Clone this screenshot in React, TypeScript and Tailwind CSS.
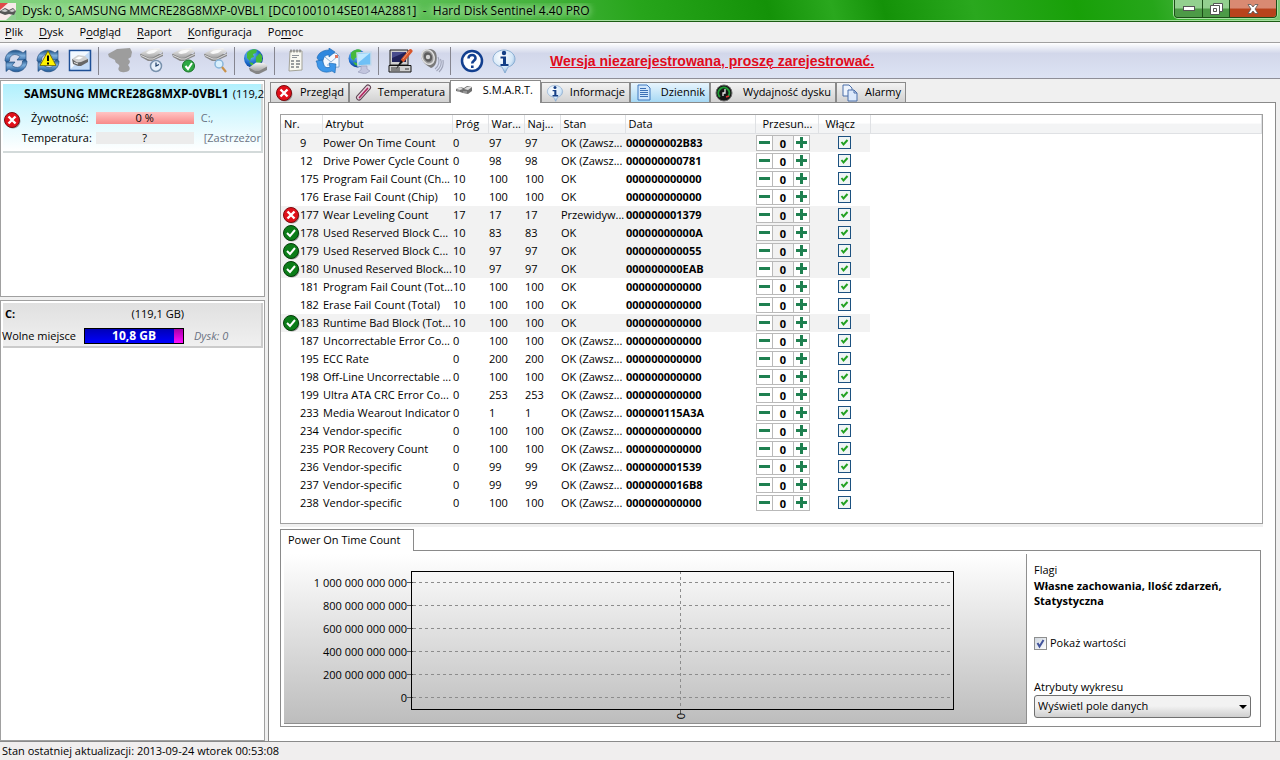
import { useState } from 'react';
import type { ReactNode } from 'react';

type Status = 'ok' | 'bad' | null;
type Row = [id: number, name: string, threshold: number, value: number, worst: number, state: string, data: string, status: Status];

const ALWAYS = 'OK (Zawsz...';

const rows: Row[] = [
  [9, 'Power On Time Count', 0, 97, 97, ALWAYS, '000000002B83', null],
  [12, 'Drive Power Cycle Count', 0, 98, 98, ALWAYS, '000000000781', null],
  [175, 'Program Fail Count (Ch...', 10, 100, 100, 'OK', '000000000000', null],
  [176, 'Erase Fail Count (Chip)', 10, 100, 100, 'OK', '000000000000', null],
  [177, 'Wear Leveling Count', 17, 17, 17, 'Przewidyw...', '000000001379', 'bad'],
  [178, 'Used Reserved Block C...', 10, 83, 83, 'OK', '00000000000A', 'ok'],
  [179, 'Used Reserved Block C...', 10, 97, 97, 'OK', '000000000055', 'ok'],
  [180, 'Unused Reserved Block...', 10, 97, 97, 'OK', '000000000EAB', 'ok'],
  [181, 'Program Fail Count (Tot...', 10, 100, 100, 'OK', '000000000000', null],
  [182, 'Erase Fail Count (Total)', 10, 100, 100, 'OK', '000000000000', null],
  [183, 'Runtime Bad Block (Tot...', 10, 100, 100, 'OK', '000000000000', 'ok'],
  [187, 'Uncorrectable Error Co...', 0, 100, 100, ALWAYS, '000000000000', null],
  [195, 'ECC Rate', 0, 200, 200, ALWAYS, '000000000000', null],
  [198, 'Off-Line Uncorrectable ...', 0, 100, 100, ALWAYS, '000000000000', null],
  [199, 'Ultra ATA CRC Error Co...', 0, 253, 253, ALWAYS, '000000000000', null],
  [233, 'Media Wearout Indicator', 0, 1, 1, ALWAYS, '000000115A3A', null],
  [234, 'Vendor-specific', 0, 100, 100, ALWAYS, '000000000000', null],
  [235, 'POR Recovery Count', 0, 100, 100, ALWAYS, '000000000000', null],
  [236, 'Vendor-specific', 0, 99, 99, ALWAYS, '000000001539', null],
  [237, 'Vendor-specific', 0, 99, 99, ALWAYS, '0000000016B8', null],
  [238, 'Vendor-specific', 0, 100, 100, ALWAYS, '000000000000', null],
];

function Defs() {
  return (
    <svg width="0" height="0" className="absolute" aria-hidden="true">
      <defs>
        <linearGradient id="steel" x1="0" y1="0" x2="0" y2="1">
          <stop offset="0" stopColor="#f6f6f6" />
          <stop offset="1" stopColor="#a2a2a2" />
        </linearGradient>
        <linearGradient id="blue" x1="0" y1="0" x2="0" y2="1">
          <stop offset="0" stopColor="#16497f" />
          <stop offset="0.45" stopColor="#7fb0dd" />
          <stop offset="1" stopColor="#1b5696" />
        </linearGradient>
        <radialGradient id="globe" cx="0.35" cy="0.3" r="0.8">
          <stop offset="0" stopColor="#7cc6fb" />
          <stop offset="0.6" stopColor="#1767c8" />
          <stop offset="1" stopColor="#0a2f78" />
        </radialGradient>
        <radialGradient id="bubble" cx="0.4" cy="0.3" r="0.8">
          <stop offset="0" stopColor="#ffffff" />
          <stop offset="0.6" stopColor="#d3e6f7" />
          <stop offset="1" stopColor="#6e9ccb" />
        </radialGradient>
      </defs>
    </svg>
  );
}

function Icon({ children, size = 26, box = 26 }: { children: ReactNode; size?: number; box?: number }) {
  return (
    <svg width={size} height={size} viewBox={`0 0 ${box} ${box}`} fill="none" className="shrink-0" aria-hidden="true">
      {children}
    </svg>
  );
}

const Drive = () => (
  <g>
    <path d="m1 6 1 3 7 4 4 0 11-5V4l-2 2Z" fill="#878787" />
    <path d="M1 5.500 10 1l10-1 4 3.500-10 6-4 .5Z" fill="url(#steel)" />
    <path d="M7 5c2-3 8-4 12-3l-4 3-5 1Z" fill="#fdfdfd" opacity=".9" />
    <path d="m2 7.500 8 3.500 4 0 10-5" stroke="#dcdcdc" />
  </g>
);

const Arrows = () => (
  <g fill="url(#blue)" stroke="#194475" strokeWidth=".6">
    <path d="M2 13C2 3 13-1 20 5l3-2.500V12h-9l3-3.500C12 4.500 6 7 6.500 13l-2 1.500Z" />
    <path d="M24 13c0 10-11 14-18 8l-3 2.500V14h9l-3 3.500c5 4 11 1.500 10.500-4.500l2-1.500Z" />
  </g>
);

const Globe = ({ r = 9 }: { r?: number }) => (
  <g>
    <circle cx="10.500" cy="10.500" r={r} fill="url(#globe)" />
    <path d="M4 5c3-4 8-4.500 10-3l-1 3-3 1 1 3-3 1-1 3-3-3Zm9 4 4-4 2 3v5l-3 3-3-2Zm-7 5 4 1 1 3-3-1Z" fill="#45b93c" />
  </g>
);

const RefreshIcon = () => <Icon><Arrows /></Icon>;

const WarnIcon = () => (
  <Icon>
    <Arrows />
    <path d="m13 3 8 14.500H5Z" fill="#fff200" stroke="#6d6400" strokeWidth=".8" />
    <path d="M13 7.500v5.500M13 14.500v2" stroke="#000" strokeWidth="2" />
  </Icon>
);

const TileIcon = () => (
  <Icon>
    <rect x="2.500" y="2.500" width="21" height="20" fill="#c4dcf8" stroke="#1e4f96" strokeWidth="1.500" />
    <path d="M3.500 3.500h19L3.500 21Z" fill="#f2f8ff" />
    <path d="m5 11 1 5 5 2 3 0 7-4v-3Z" fill="#676767" />
    <path d="m5 11 6-4 7 1 3 3-7 3-4 .5Z" fill="#cfcfcf" />
    <path d="m8 10.500 4-2 4 1-4 2Z" fill="#fff" />
    <path d="m7 14.500 4 1.500" stroke="#e5e5e5" />
  </Icon>
);

const DriveOffIcon = () => (
  <Icon>
    <path d="m1 6 9-5 13-1 2 4-1 5-3 2c3 2 2 4 0 6 3 3 2 7-3 7-5 1-8-2-6-5 1-1 0-2-1-3-2-1-3-2-3-4l-6-3Z" fill="#9d9d9d" />
  </Icon>
);

const DriveClockIcon = () => (
  <Icon>
    <Drive />
    <circle cx="17" cy="18" r="5.500" fill="#e6f0fa" stroke="#7992ad" strokeWidth="1.500" />
    <path d="M17 14.500V18l3-1.500" stroke="#1c3d66" strokeWidth="1.200" />
  </Icon>
);

const DriveCheckIcon = () => (
  <Icon>
    <Drive />
    <circle cx="17.500" cy="18" r="6" fill="#2ea844" stroke="#177225" />
    <path d="m14.500 18 2.500 3 4-6" stroke="#fff" strokeWidth="2" />
  </Icon>
);

const DriveSearchIcon = () => (
  <Icon>
    <Drive />
    <circle cx="16" cy="16" r="4" fill="#d9effc" stroke="#88b5da" strokeWidth="1.500" />
    <path d="m19 19 4 5" stroke="#c9924a" strokeWidth="2.200" />
  </Icon>
);

const GlobeDriveIcon = () => (
  <Icon>
    <Globe r={9.500} />
    <path d="m6 20 1 3 6 3 3 0 8-4v-4Z" fill="#858585" />
    <path d="m6 19.500 7-5 8 .5 4 3-9 5-4 0Z" fill="url(#steel)" />
  </Icon>
);

const ReportIcon = () => (
  <Icon>
    <path d="M7 3h12v19l-13 1Z" fill="#f8f8f2" stroke="#a3a398" />
    <path d="M8 1.500v3M11 1.500v3M14 1.500v3M17 1.500v3" stroke="#666" />
    <path d="M9 7.500h7M9 9.500h5" stroke="#8c9299" />
    <path d="M8 13h3M13 13h4M8 16h3M13 16h4M8 19h3M13 19h3" stroke="#7a7f84" strokeWidth="1.300" />
  </Icon>
);

const MailIcon = () => (
  <Icon>
    <path d="m8 6 13-1 3 3v11L8 20Z" fill="#f4f9ff" stroke="#7ea4cd" />
    <path d="m10 9 6 5 7-6M12 17h8" stroke="#8fb0d3" />
    <path d="M20 7h3v3h-3Z" fill="#e0755f" />
    <path d="M2 10c1-5 6-8 12-8V0l6 4-6 5V7c-4 0-5 2-6 5l-3 2Z" fill="#2d87de" stroke="#1763ad" strokeWidth=".6" />
    <path d="m1 13 6-1 2 5c1 3 4 3 6 2l-1-4 7 1-1 9-3-2c-7 3-15 0-15-8Z" fill="#3d97ea" stroke="#1763ad" strokeWidth=".6" />
  </Icon>
);

const NetworkIcon = () => (
  <Icon>
    <Globe r={9} />
    <path d="m10 5 14-1v13l-13 1Z" fill="#6fc0f6" stroke="#c6d9ea" strokeWidth="1.500" />
    <path d="m11 6 12-1-12 10Z" fill="#bfe8ff" />
    <path d="m14 18 6 0v3l3 2-5 3-7-2 3-2Z" fill="#c2c5de" stroke="#9498b5" strokeWidth=".6" />
  </Icon>
);

const ComputerIcon = () => (
  <Icon>
    <path d="M3 2h18v15H3Z" fill="#cfcfcf" stroke="#222" />
    <path d="M5 4h14v10H5Z" fill="#20225a" />
    <path d="M5 4h14l-14 6Z" fill="#494c8c" />
    <path d="M2 17.500h22v6.500H2Z" fill="#cfcfcf" stroke="#111" />
    <path d="M4 20h9M4 22h9M18 21h4" stroke="#333" />
    <path d="M23.500 3 16 12" stroke="#d8562c" strokeWidth="4" strokeLinecap="round" />
    <path d="M22.500 3 16 11" stroke="#f49b6d" />
    <path d="m14 12-5 9 7-7Z" fill="#111" />
  </Icon>
);

const SpeakerIcon = () => (
  <Icon>
    <path d="M4 3c4-3 11-3 13 2 2 6 0 14-5 15C8 18 2 13 2 8Z" fill="#7a7a7a" />
    <ellipse cx="9" cy="9" rx="6" ry="7.500" transform="rotate(-25 9 9)" fill="#9b9b9b" stroke="#dedede" strokeWidth="1.500" />
    <ellipse cx="9" cy="9" rx="4" ry="5" transform="rotate(-25 9 9)" fill="#5d5d5d" />
    <circle cx="9" cy="9" r="2.200" fill="#d5d5d5" />
    <path d="M19 9c2 4 1 9-3 12M21.500 11c2 4 0 9-4 12M24 12c1 5-1 9-4 12" stroke="#9fa4b8" strokeWidth="1.100" />
  </Icon>
);

const HelpIcon = () => (
  <Icon>
    <circle cx="13" cy="13" r="10" fill="#fff" stroke="#123f8f" strokeWidth="2.500" />
    <path d="M9.500 10.500C9.500 5.500 17 6 16.500 10.500c-.2 2.200-3.300 2.500-3.300 5" stroke="#123f8f" strokeWidth="2.600" />
    <path d="M12 17.500h2.600V20H12Z" fill="#123f8f" />
  </Icon>
);

const InfoIcon = ({ size = 26 }: { size?: number }) => (
  <Icon size={size}>
    <path d="M13 2c6 0 11 4 11 9 0 4-3 7-7 8l-3 6-3-6c-5-1-9-4-9-8 0-5 5-9 11-9Z" fill="url(#bubble)" stroke="#7ba3cc" strokeWidth=".8" />
    <circle cx="13" cy="5" r="2.200" fill="#153f86" />
    <path d="M9.500 8.500H15V16h2.500v2h-8v-2H12v-5.500H9.500Z" fill="#153f86" />
  </Icon>
);

function StatusIcon({ ok, size = 18 }: { ok: boolean; size?: number }) {
  return (
    <Icon size={size} box={18}>
      <circle cx="10" cy="10" r="7.500" fill="#777" opacity=".7" />
      <circle cx="9" cy="9" r="7.500" fill={ok ? '#0b7d18' : '#e0101a'} stroke={ok ? '#053d0b' : '#7d0a0e'} />
      {ok ? (
        <path d="m5 9 3 3 5-6" stroke="#fff" strokeWidth="2" />
      ) : (
        <path d="m5.500 5.500 7 7m0-7-7 7" stroke="#fff" strokeWidth="2.400" />
      )}
    </Icon>
  );
}

const ThermoIcon = () => (
  <Icon size={18} box={18}>
    <path d="M14 3.500 5 13.500" stroke="#5d4452" strokeWidth="6" strokeLinecap="round" />
    <path d="M14 3.500 5 13.500" stroke="#e9d3de" strokeWidth="4" strokeLinecap="round" />
    <path d="m13.500 4.500-8 9" stroke="#b0265e" strokeWidth="1.700" strokeLinecap="round" />
  </Icon>
);

const MiniDriveIcon = () => (
  <Icon size={18} box={18}>
    <path d="m1 7 4-2 4 1 3-2 5 1v4l-4 3-5-1-3-1-4-1Z" fill="#6f6f6f" />
    <path d="m1 7 4-2 3 2-3 1ZM9 7l3-2 5 0-4 3Z" fill="#ddd" />
    <path d="M2 9h3M8 10h4" stroke="#bbb" />
  </Icon>
);

const LogIcon = () => (
  <Icon size={18} box={18}>
    <path d="M3 1h9l3 3v12H3Z" fill="#cfe6fc" stroke="#3f78bf" />
    <path d="M5 4.500h6M5 6.500h8M5 8.500h8M5 10.500h8M5 12.500h8" stroke="#3b6fb5" />
  </Icon>
);

const GaugeIcon = () => (
  <Icon size={18} box={18}>
    <circle cx="9" cy="9" r="8" fill="#151515" stroke="#6b6b6b" />
    <path d="M5 13a5.500 5.500 0 1 1 8.500-1" stroke="#1f9a35" strokeWidth="2" />
    <path d="M8 12V9h2V5" stroke="#e8e8e8" strokeWidth="1.300" />
    <path d="M11 13l3-1" stroke="#e03030" strokeWidth="1.500" />
  </Icon>
);

const CopyIcon = () => (
  <Icon size={18} box={18}>
    <path d="M2 1h6l3 3v8H2Z" fill="#eef4fd" stroke="#4a6ea9" />
    <path d="M7 6h6l3 3v8H7Z" fill="#dce9fb" stroke="#4a6ea9" />
    <path d="M13 6v3h3" stroke="#4a6ea9" />
  </Icon>
);

const menu: [string, string, string][] = [
  ['', 'P', 'lik'],
  ['', 'D', 'ysk'],
  ['P', 'o', 'dgląd'],
  ['', 'R', 'aport'],
  ['', 'K', 'onfiguracja'],
  ['Po', 'm', 'oc'],
];

const toolGroups: { label: string; icon: ReactNode }[][] = [
  [
    { label: 'Odśwież', icon: <RefreshIcon /> },
    { label: 'Odśwież ostrzeżenia', icon: <WarnIcon /> },
    { label: 'Widok dysku', icon: <TileIcon /> },
  ],
  [
    { label: 'Dysk niedostępny', icon: <DriveOffIcon /> },
    { label: 'Krótki test', icon: <DriveClockIcon /> },
    { label: 'Pełny test', icon: <DriveCheckIcon /> },
    { label: 'Test powierzchni', icon: <DriveSearchIcon /> },
  ],
  [{ label: 'Dysk sieciowy', icon: <GlobeDriveIcon /> }],
  [
    { label: 'Raport', icon: <ReportIcon /> },
    { label: 'Wyślij raport', icon: <MailIcon /> },
    { label: 'Sieć', icon: <NetworkIcon /> },
  ],
  [
    { label: 'Ustawienia', icon: <ComputerIcon /> },
    { label: 'Dźwięk', icon: <SpeakerIcon /> },
  ],
  [
    { label: 'Pomoc', icon: <HelpIcon /> },
    { label: 'Informacje', icon: <InfoIcon /> },
  ],
];

const tabs = [
  { label: 'Przegląd', icon: <StatusIcon ok={false} />, width: 'w-[79px]' },
  { label: 'Temperatura', icon: <ThermoIcon />, width: 'w-[101px]' },
  { label: 'S.M.A.R.T.', icon: <MiniDriveIcon />, width: 'w-[91px]' },
  { label: 'Informacje', icon: <InfoIcon size={18} />, width: 'w-[89px]' },
  { label: 'Dziennik', icon: <LogIcon />, width: 'w-[80px]' },
  { label: 'Wydajność dysku', icon: <GaugeIcon />, width: 'w-[126px]' },
  { label: 'Alarmy', icon: <CopyIcon />, width: 'w-[70px]' },
];

function TitleBar() {
  return (
    <header className="flex h-[22px] shrink-0 items-center border-b border-[#1c5c14] bg-[linear-gradient(75deg,#86d381_0%,#6cc766_25%,#45b33d_42%,#27a51b_50%,#149208_60%,#2aa81e_65%,#149208_69%,#2aa81e_76%,#18a008_84%,#26a61a_90%,#7dcb78_100%)] shadow-[inset_0_-1px_0_#a5dfa0]">
      <svg width="18" height="20" viewBox="0 0 18 20" className="shrink-0" aria-hidden="true">
        <path d="M0 2h16v17H0Z" fill="#f7eaea" />
        <path d="M0 2h8L0 9Z" fill="#e04a4a" />
        <path d="M16 10v9H6Z" fill="#8fcf92" />
        <path d="m0 10 5-3 4 2 4-2 3 3-2 4-5-1-4 1-5-2Z" fill="#555" />
        <path d="m1 10 4-2 3 2-3 1Zm8 0 4-2 2 2-3 1Z" fill="#ccc" />
      </svg>
      <h1 className="ml-1 flex-1 truncate text-xs whitespace-pre [text-shadow:0_0_6px_#d8f5d4,0_0_8px_#d8f5d4]">
        Dysk: 0, SAMSUNG MMCRE28G8MXP-0VBL1 [DC01001014SE014A2881]  -  Hard Disk Sentinel 4.40 PRO
      </h1>
      <div className="mr-[3px] flex h-[18px] self-start overflow-hidden rounded-b border border-t-0 border-[#1c4d18] shadow-[0_0_0_1px_#a8e0a2]">
        <button aria-label="Minimalizuj" className="grid w-[28px] place-items-center border-r border-[#1c4d18] bg-linear-to-b from-[#93d08f] from-45% to-[#4d9a47] to-55%">
          <svg width="12" height="5" viewBox="0 0 12 5"><rect x=".5" y=".5" width="11" height="4" fill="#fff" stroke="#555" /></svg>
        </button>
        <button aria-label="Przywróć" className="grid w-[27px] place-items-center border-r border-[#1c4d18] bg-linear-to-b from-[#93d08f] from-45% to-[#4d9a47] to-55%">
          <svg width="13" height="12" viewBox="0 0 13 12" fill="#fff" stroke="#555">
            <path d="M3.500.5h9v8h-9Z" />
            <path d="M.5 2.500h9v9h-9ZM3.500 5.500h3v3h-3Z" fillRule="evenodd" />
          </svg>
        </button>
        <button aria-label="Zamknij" className="grid w-[46px] place-items-center bg-linear-to-b from-[#d98a72] from-45% to-[#b8431c] to-55%">
          <svg width="12" height="10" viewBox="0 0 12 10">
            <path d="M1 .5h3l2 2.500 2-2.500h3L8 5l3 4.500H8L6 7 4 9.500H1L4 5Z" fill="#fff" stroke="#555" strokeWidth=".8" />
          </svg>
        </button>
      </div>
    </header>
  );
}

function Toolbar() {
  return (
    <div className="flex h-[36px] shrink-0 items-center border-b border-[#8f8f98] bg-linear-to-b from-white via-[#d2d7ea] via-30% to-[#dde3f4]">
      {toolGroups.map((group, i) => (
        <div key={group[0].label} className="flex items-center">
          {i > 0 && <span className="mr-[5px] ml-[2px] h-[28px] w-px bg-[#85858f]" />}
          {group.map(tool => (
            <button key={tool.label} aria-label={tool.label} className="grid size-8 place-items-center">
              {tool.icon}
            </button>
          ))}
        </div>
      ))}
      <a href="#register" className="ml-[30px] font-['Liberation_Sans',Arial,sans-serif] text-sm font-bold text-[#e00b1c] underline">
        Wersja niezarejestrowana, proszę zarejestrować.
      </a>
    </div>
  );
}

function Sidebar() {
  return (
    <aside className="flex w-[265px] shrink-0 flex-col gap-[3px] pt-px whitespace-nowrap">
      <section className="h-[217px] border border-[#a0a0a0] bg-white p-[2px] pr-px">
        <div className="h-[69px] border-r-2 border-b-2 border-[#d3dada] bg-linear-to-b from-[#b0f0fd] to-white">
          <p className="mt-px ml-[21px] flex gap-1 leading-5"><b className="text-xs leading-5">SAMSUNG MMCRE28G8MXP-0VBL1</b> (119,2</p>
          <div className="flex pt-1">
            <div className="flex w-[19px] pt-[3px]"><StatusIcon ok={false} /></div>
            <div className="grid flex-1 grid-cols-[67px_98px_1fr] gap-x-[7px] leading-5">
              <span className="text-right">Żywotność:</span>
              <span className="my-1 bg-linear-to-b from-[#ffc4c4] to-[#f78a8a] text-center leading-3">0 %</span>
              <span className="text-gray-500">C:,</span>
              <span className="text-right">Temperatura:</span>
              <span className="my-1 bg-[#ececec] text-center leading-3">?</span>
              <span className="pl-[3px] text-gray-500">[Zastrzeżor</span>
            </div>
          </div>
        </div>
      </section>
      <section className="flex-1 border border-[#a0a0a0] bg-white p-[2px] pr-px">
        <div className="h-[45px] border-r-2 border-b-2 border-[#cbcbcb] bg-linear-to-b from-[#e0e0e0] to-[#f0f0f0]">
          <p className="flex w-[181px] justify-between pl-[2px] leading-[22px]"><b>C:</b><span>(119,1 GB)</span></p>
          <div className="-ml-px flex items-center leading-[22px]">
            <span className="w-[82px]">Wolne miejsce</span>
            <span className="flex h-4 w-[100px] border border-black bg-linear-to-b from-[#0000b8] to-[#0000ff] text-center text-xs font-bold text-white">
              <span className="-mr-[9px] flex-1 leading-[14px]">10,8 GB</span>
              <span className="w-[9px] bg-linear-to-b from-[#a800a8] to-[#ff10ff]" />
            </span>
            <i className="ml-[10px] text-gray-500">Dysk: 0</i>
          </div>
        </div>
      </section>
    </aside>
  );
}

function Tabs() {
  const [active, setActive] = useState('S.M.A.R.T.');

  return (
    <nav className="flex h-[22px] shrink-0 items-end pl-[2px]">
      {tabs.map(tab => (
        <button
          key={tab.label}
          onClick={() => setActive(tab.label)}
          className={`${tab.width} flex items-center justify-between border border-b-0 border-[#8a8a8a] pr-1 pl-1 whitespace-nowrap ${
            tab.label === active
              ? 'z-10 -mb-px h-[23px] bg-white pr-[7px] pb-[3px]'
              : tab.label === 'Dziennik'
                ? 'h-5 border-[#3c7fb1] bg-linear-to-b from-[#e8f5fd] to-[#a6d8f4]'
                : 'h-5 bg-linear-to-b from-[#f3f3f3] to-[#d2d2d2]'
          }`}
        >
          {tab.icon}
          {tab.label}
        </button>
      ))}
    </nav>
  );
}

function Offset({ name }: { name: string }) {
  const [value, setValue] = useState(0);

  return (
    <div className="flex h-4 w-[54px] border border-[#b9b9b9]">
      <button aria-label={`Zmniejsz ${name}`} onClick={() => setValue(value - 1)} className="grid w-[15px] place-items-center bg-white">
        <span className="h-[3px] w-[11px] bg-[#1e8050]" />
      </button>
      <span className="flex-1 border-x border-[#b9b9b9] text-center leading-[15px] font-bold">{value}</span>
      <button aria-label={`Zwiększ ${name}`} onClick={() => setValue(value + 1)} className="grid w-[15px] place-items-center bg-white">
        <svg width="11" height="11" viewBox="0 0 11 11"><path d="M4 0h3v4h4v3H7v4H4V7H0V4h4Z" fill="#1e8050" /></svg>
      </button>
    </div>
  );
}

function SmartTable() {
  return (
    <div className="h-[410px] shrink-0 border border-[#a0a0a0] bg-white">
      <table className="w-full table-fixed border-collapse text-left whitespace-nowrap">
        <colgroup>
          <col className="w-[41px]" />
          <col className="w-[130px]" />
          <col className="w-[36px]" />
          <col className="w-[36px]" />
          <col className="w-[36px]" />
          <col className="w-[65px]" />
          <col className="w-[130px]" />
          <col className="w-[63px]" />
          <col className="w-[52px]" />
          <col />
        </colgroup>
        <thead>
          <tr className="h-[18px] leading-[17px] *:border-r *:border-b *:border-[#dfe1e4] *:bg-linear-to-b *:from-white *:from-45% *:to-[#f3f4f5] *:to-50% *:p-0 *:pl-[3px] *:font-normal">
            <th>Nr.</th>
            <th>Atrybut</th>
            <th>Próg</th>
            <th>War...</th>
            <th>Naj...</th>
            <th>Stan</th>
            <th>Data</th>
            <th><span className="pl-1">Przesun...</span></th>
            <th><span className="pl-1">Włącz</span></th>
            <th aria-hidden="true" />
          </tr>
        </thead>
        <tbody>
          {rows.map(([id, name, threshold, value, worst, state, data, status], i) => (
            <tr key={id} className={`h-[18px] leading-[18px] *:p-0 *:pl-px ${status || i === 0 ? '*:not-last:bg-[#f2f2f2]' : ''}`}>
              <td>
                <div className="flex h-[18px] items-center">
                  <span className="w-[18px]">{status && <StatusIcon ok={status === 'ok'} />}</span>
                  {id}
                </div>
              </td>
              <td>{name}</td>
              <td>{threshold}</td>
              <td>{value}</td>
              <td>{worst}</td>
              <td>{state}</td>
              <td className="font-bold">{data}</td>
              <td><Offset name={name} /></td>
              <td>
                <label className="ml-[19px] grid size-[13px]">
                  <input type="checkbox" defaultChecked aria-label={`Włącz ${name}`} className="peer size-[13px] appearance-none border border-[#1c5180] bg-[#f0f5f5] [grid-area:1/1]" />
                  <svg width="13" height="13" viewBox="0 0 13 13" className="invisible [grid-area:1/1] peer-checked:visible">
                    <path d="m3.500 6 2 2.500L9.500 4" fill="none" stroke="#21a121" strokeWidth="2" />
                  </svg>
                </label>
              </td>
              <td />
            </tr>
          ))}
        </tbody>
      </table>
    </div>
  );
}

const ticks = ['1 000 000 000 000', '800 000 000 000', '600 000 000 000', '400 000 000 000', '200 000 000 000', '0'];

function Chart() {
  return (
    <div className="flex flex-1 border-r border-b border-[#8f8f8f] bg-linear-to-b from-white to-[#bdbdbd] pt-[17px] pr-[72px]">
      <div className="w-[123px] text-right">
        {ticks.map(t => <div key={t} className="h-[23px] leading-[23px]">{t}</div>)}
      </div>
      <svg className="h-[152px] min-w-0 flex-1" aria-hidden="true">
        {ticks.map((t, i) => (
          <g key={t} stroke="#8c8c8c">
            <line x1="0" x2="6" y1={11.5 + i * 23} y2={11.5 + i * 23} stroke="#555" />
            <line x1="6" x2="100%" y1={11.5 + i * 23} y2={11.5 + i * 23} strokeDasharray="3 3" />
          </g>
        ))}
        <line x1="50%" x2="50%" y1="0" y2="138" stroke="#8c8c8c" strokeDasharray="3 3" />
        <path d="M4.500 0v139" stroke="#000" />
        <line x1="4" x2="100%" y1=".5" y2=".5" stroke="#000" />
        <line x1="4" x2="100%" y1="138.500" y2="138.500" stroke="#000" />
        <line x1="100%" x2="100%" y1="0" y2="139" stroke="#000" strokeWidth="2" />
        <line x1="50%" x2="50%" y1="139" y2="143" stroke="#555" />
        <svg x="50%" y="142" overflow="visible">
          <text transform="translate(4 3) rotate(-90)" fontSize="11" textAnchor="middle">0</text>
        </svg>
      </svg>
    </div>
  );
}

function DetailPanel() {
  return (
    <section className="pt-[2px]">
      <div className="relative z-10 -mb-px h-[22px] w-[134px] border border-b-0 border-[#8a8a8a] bg-white pl-[7px] leading-5 whitespace-nowrap">
        Power On Time Count
      </div>
      <div className="mr-[2px] flex h-[177px] border border-[#8a8a8a] bg-white p-[3px] pb-[2px]">
        <Chart />
        <div className="flex w-[230px] flex-col pr-[6px] pl-[7px]">
          <p className="mt-[8px] leading-4">Flagi</p>
          <p className="leading-[15px] font-bold">Własne zachowania, Ilość zdarzeń, Statystyczna</p>
          <label className="mt-[27px] flex h-4 items-center gap-[3px] leading-4 whitespace-nowrap">
            <span className="grid">
              <input type="checkbox" defaultChecked className="peer size-[13px] appearance-none border border-[#8e8f8f] bg-linear-to-br from-[#cfd6de] to-white [grid-area:1/1]" />
              <svg width="13" height="13" viewBox="0 0 13 13" className="invisible [grid-area:1/1] peer-checked:visible">
                <path d="m3.500 6 2 3.500L9.500 3" fill="none" stroke="#42549c" strokeWidth="2" />
              </svg>
            </span>
            Pokaż wartości
          </label>
          <label htmlFor="graph" className="mt-[28px] leading-4">Atrybuty wykresu</label>
          <div className="grid items-center">
            <select id="graph" className="h-[23px] appearance-none rounded-[3px] border border-[#707070] bg-linear-to-b from-[#f2f2f2] from-48% to-[#cfcfcf] px-[3px] [grid-area:1/1]">
              <option>Wyświetl pole danych</option>
            </select>
            <svg width="8" height="4" viewBox="0 0 8 4" className="pointer-events-none mr-1 justify-self-end [grid-area:1/1]">
              <path d="M0 0h8L4 4Z" fill="#000" />
            </svg>
          </div>
        </div>
      </div>
    </section>
  );
}

export default function App() {
  return (
    <div className="flex h-screen flex-col overflow-hidden bg-[#f0f0f0] font-['Open_Sans','Noto_Sans',sans-serif] text-[11px] text-black">
      <Defs />
      <TitleBar />
      <nav className="flex h-[21px] shrink-0 items-center gap-4 border-b border-[#a0a0a0] pl-[5px]">
        {menu.map(([before, key, after]) => (
          <button key={before + key + after}>{before}<u className="underline-offset-2">{key}</u>{after}</button>
        ))}
      </nav>
      <Toolbar />
      <div className="flex min-h-0 flex-1 gap-[3px]">
        <Sidebar />
        <main className="mr-1 flex min-w-0 flex-1 flex-col pt-px">
          <Tabs />
          <div className="flex-1 border border-b-0 border-[#8a8a8a] bg-white pt-[11px] pr-3 pl-[11px]">
            <SmartTable />
            <div className="h-[3px] bg-[#f0f0f0]" />
            <DetailPanel />
          </div>
        </main>
      </div>
      <footer className="h-[19px] shrink-0 border-t border-[#8a8a8a] bg-[#f0eeee] pl-[2px] leading-[18px]">
        Stan ostatniej aktualizacji: 2013-09-24 wtorek 00:53:08
      </footer>
    </div>
  );
}
